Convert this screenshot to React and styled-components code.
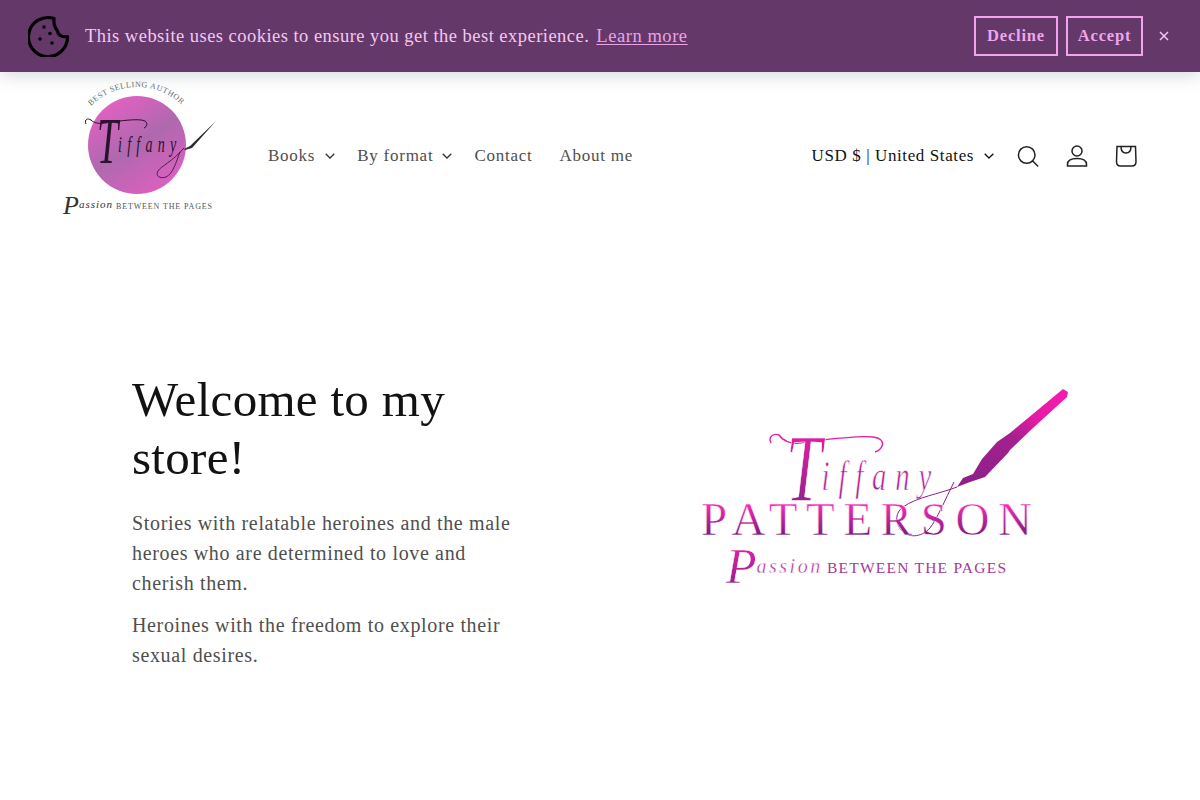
import React from "react";
import styled, { createGlobalStyle } from "styled-components";

const GlobalStyle = createGlobalStyle`
  html, body { margin: 0; padding: 0; background: #fff; }
  body { font-family: "Liberation Serif", "Times New Roman", serif; }
`;

const Banner = styled.div`
  position: relative;
  z-index: 2;
  height: 72px;
  box-sizing: border-box;
  padding: 0 23px 0 28px;
  display: flex;
  align-items: center;
  background: #65386a;
  color: #f2c9f0;
  box-shadow: 0 4px 16px rgba(60, 80, 70, 0.2);
`;

const BannerText = styled.span`
  margin-left: 15px;
  font-size: 18.5px;
  letter-spacing: 0.47px;
`;

const LearnMore = styled.a`
  margin-left: 7px;
  font-size: 18.5px;
  letter-spacing: 0.56px;
  color: #e9a3e6;
  text-decoration: underline;
  text-underline-offset: 2px;
`;

const BannerActions = styled.div`
  margin-left: auto;
  display: flex;
  align-items: center;
  gap: 8px;
`;

const BannerButton = styled.button`
  width: ${(p) => p.$width}px;
  height: 40px;
  padding: 0;
  background: transparent;
  border: 2px solid #f0a4ee;
  color: #eca6e9;
  font-family: inherit;
  font-size: 16.5px;
  font-weight: 700;
  letter-spacing: 0.8px;
`;

const CloseButton = styled.button`
  width: 26px;
  padding: 0;
  background: none;
  border: 0;
  display: flex;
  justify-content: center;
  color: #f2c9f0;
`;

const Header = styled.header`
  height: 168px;
  box-sizing: border-box;
  padding: 0 50px 0 60px;
  display: flex;
  align-items: center;
`;

const Nav = styled.nav`
  margin-left: 48px;
  display: flex;
  align-items: center;
`;

const NavItem = styled.a`
  margin-right: ${(p) => p.$gap}px;
  display: flex;
  align-items: center;
  font-size: 17px;
  letter-spacing: 0.75px;
  color: #4f4f4f;
`;

const Chevron = styled.svg`
  width: 10px;
  height: 6px;
  margin-left: ${(p) => p.$offset}px;
  fill: none;
  stroke: ${(p) => p.$color || "#333"};
  stroke-width: 1.3;
`;

const HeaderRight = styled.div`
  margin-left: auto;
  display: flex;
  align-items: center;
`;

const Locale = styled.div`
  margin-right: 9px;
  display: flex;
  align-items: center;
  font-size: 17px;
  letter-spacing: 0.6px;
  color: #121212;
`;

const IconSlot = styled.div`
  width: 49px;
  height: 44px;
  display: flex;
  align-items: center;
  justify-content: center;
`;

const LineIcon = styled.svg`
  width: 24px;
  height: 24px;
  fill: none;
  stroke: #222;
  stroke-width: 1.5;
  stroke-linecap: round;
`;

const Hero = styled.main`
  display: grid;
  grid-template-columns: 600px 600px;
  padding-top: 130px;
`;

const HeroText = styled.section`
  padding: 1px 0 0 132px;
  width: 400px;
`;

const Heading = styled.h1`
  margin: 0 0 21px;
  font-size: 49px;
  line-height: 58px;
  font-weight: 400;
  letter-spacing: 0.3px;
  color: #121212;
`;

const Paragraph = styled.p`
  margin: 0 0 12px;
  font-size: 20px;
  line-height: 30px;
  letter-spacing: 0.65px;
  color: #4f4f4f;
`;

const HeroMedia = styled.section`
  padding-left: 80px;
`;

const LogoSvg = styled.svg`
  display: block;
  flex: none;
`;

const CookieIcon = () => (
  <svg width="42" height="42" viewBox="28 15 42 42">
    <path
      d="M54 18.5A19.5 19.5 0 1 0 67.5 36.5C62 37.5 58 35 57.5 31C55 28 53.5 24 54 18.5z"
      fill="none"
      stroke="#000"
      strokeWidth="3.2"
      strokeLinejoin="round"
    />
    <circle cx="44" cy="27" r="1.8" />
    <circle cx="50" cy="33.5" r="1.8" />
    <circle cx="40" cy="39" r="1.8" />
    <circle cx="52" cy="43" r="1.8" />
  </svg>
);

const SmallLogo = () => (
  <LogoSvg width="160" height="156" viewBox="60 78 160 156">
    <defs>
      <linearGradient id="disc" x1="0.15" y1="0.05" x2="0.75" y2="1">
        <stop offset="0" stopColor="#e660c4" />
        <stop offset="0.5" stopColor="#ae69ae" />
        <stop offset="1" stopColor="#e05fc0" />
      </linearGradient>
      <path id="arc" d="M91 106 A 65 65 0 0 1 183 106" />
    </defs>
    <circle cx="137" cy="145" r="49" fill="url(#disc)" />
    <text fontFamily="Liberation Serif" fontSize="8" fill="#6b6b6b">
      <textPath href="#arc" textLength="100">BEST SELLING AUTHOR</textPath>
    </text>
    <path d="M86 124c-2-5 2-6 5-4 3 3 8 4 14 3 14-2 34-5 40-2 3 2 2 6-1 7" fill="none" stroke="#2a1230" strokeWidth="1" />
    <text transform="translate(97 163) scale(0.7 1.2)" fontFamily="Liberation Serif" fontStyle="italic" fill="#2a1230">
      <tspan fontSize="54">T</tspan>
      <tspan fontSize="20" dy="-9" letterSpacing="7.5">iffany</tspan>
    </text>
    <path d="M180 152c-4 10-7 22-14 25-6 2-11-1-8-6 3-5 14-9 26-23" fill="none" stroke="#2a1230" strokeWidth="0.8" />
    <path d="M184 149l6-3 26-25-24 27-7 2z" fill="#2e2a30" />
    <text x="63" y="214" fontFamily="Liberation Serif" fontStyle="italic" fill="#333">
      <tspan fontSize="26">P</tspan>
      <tspan fontSize="11" dy="-6" letterSpacing="1">assion</tspan>
    </text>
    <text x="116" y="209" fontFamily="Liberation Serif" fontSize="8" fill="#555" textLength="96">
      BETWEEN THE PAGES
    </text>
  </LogoSvg>
);

const BigLogo = () => (
  <LogoSvg width="400" height="230" viewBox="680 370 400 230">
    <defs>
      <linearGradient id="caps" x1="0" y1="0" x2="0" y2="1">
        <stop offset="0.25" stopColor="#f02cb0" />
        <stop offset="0.8" stopColor="#7d1a80" />
      </linearGradient>
      <linearGradient id="pen" x1="0" y1="1" x2="1" y2="0">
        <stop offset="0" stopColor="#8b2088" />
        <stop offset="0.5" stopColor="#a3208f" />
        <stop offset="0.7" stopColor="#e31ba6" />
        <stop offset="1" stopColor="#f81bb0" />
      </linearGradient>
      <linearGradient id="script" x1="0" y1="0" x2="0" y2="1">
        <stop offset="0.1" stopColor="#e81fa8" />
        <stop offset="0.9" stopColor="#8e2389" />
      </linearGradient>
    </defs>
    <path
      d="M957 487L963 478L973 474L982 459L997 442L1010 433L1063 389L1068 392L1067 397L1033 428L1010 450L1008 453L985 477L970 482z"
      fill="url(#pen)"
    />
    <path
      d="M771 443c-3-6 2-10 8-8 4 6 12 9 20 8 18-2 56-8 74-6 8 1 11 5 9 9-1 3-4 5-7 6"
      fill="none"
      stroke="#e71fa7"
      strokeWidth="1.4"
    />
    <text
      transform="translate(786 501) scale(0.8 1.2)"
      fontFamily="Liberation Serif"
      fontStyle="italic"
      fill="url(#script)"
      stroke="#fff"
      strokeWidth="0.6"
    >
      <tspan fontSize="80">T</tspan>
      <tspan fontSize="36" dy="-9" letterSpacing="11">iffany</tspan>
    </text>
    <path
      d="M957 487c-18 7-40 10-54 20-8 6-8 15-2 23 7 8 20 8 29-2 7-9 15-28 24-46"
      fill="none"
      stroke="#8c2189"
      strokeWidth="1"
    />
    <text
      x="701"
      y="535"
      fontFamily="Liberation Serif"
      fontSize="47"
      fill="url(#caps)"
      stroke="#fff"
      strokeWidth="0.5"
      textLength="331"
    >
      PATTERSON
    </text>
    <text
      x="726"
      y="583"
      fontFamily="Liberation Serif"
      fontStyle="italic"
      fill="url(#script)"
      stroke="#fff"
      strokeWidth="0.4"
    >
      <tspan fontSize="50">P</tspan>
      <tspan fontSize="20" dy="-10" letterSpacing="2.5">assion</tspan>
    </text>
    <text x="827" y="573" fontFamily="Liberation Serif" fontSize="15.5" fill="#a33a98" textLength="179">
      BETWEEN THE PAGES
    </text>
  </LogoSvg>
);

const DownChevron = ({ offset, color }) => (
  <Chevron viewBox="0 0 10 6" $offset={offset} $color={color}>
    <path d="M.7 .7 5 5l4.3-4.3" />
  </Chevron>
);

export default function App() {
  return (
    <>
      <GlobalStyle />
      <Banner>
        <CookieIcon />
        <BannerText>This website uses cookies to ensure you get the best experience.</BannerText>
        <LearnMore>Learn more</LearnMore>
        <BannerActions>
          <BannerButton $width={84}>Decline</BannerButton>
          <BannerButton $width={77}>Accept</BannerButton>
          <CloseButton>
            <svg width="10" height="10" viewBox="0 0 10 10" stroke="currentColor" strokeWidth="1.5">
              <path d="M1 1l8 8M9 1l-8 8" />
            </svg>
          </CloseButton>
        </BannerActions>
      </Banner>
      <Header>
        <SmallLogo />
        <Nav>
          <NavItem $gap={22}>
            Books
            <DownChevron offset={10} />
          </NavItem>
          <NavItem $gap={22}>
            By format
            <DownChevron offset={9} />
          </NavItem>
          <NavItem $gap={27}>Contact</NavItem>
          <NavItem $gap={0}>About me</NavItem>
        </Nav>
        <HeaderRight>
          <Locale>
            USD $ | United States
            <DownChevron offset={10} color="#121212" />
          </Locale>
          <IconSlot>
            <LineIcon viewBox="0 0 24 24">
              <circle cx="10.7" cy="11" r="8.3" />
              <path d="M16.7 17l5 5" />
            </LineIcon>
          </IconSlot>
          <IconSlot>
            <LineIcon viewBox="0 0 24 24">
              <circle cx="12" cy="7" r="5" />
              <path d="M2.5 22v-1.500c0-4 4-6 9.500-6s9.500 2 9.500 6V22z" />
            </LineIcon>
          </IconSlot>
          <IconSlot>
            <LineIcon viewBox="0 0 24 24">
              <path d="M3 2.500h18.500l.5 15c0 2.500-1.500 4.500-4 4.500H6.500c-2.500 0-4-2-4-4.500z" />
              <path d="M7 2.500c0 4 2 6.500 5 6.500s5-2.500 5-6.500" />
            </LineIcon>
          </IconSlot>
        </HeaderRight>
      </Header>
      <Hero>
        <HeroText>
          <Heading>Welcome to my store!</Heading>
          <Paragraph>Stories with relatable heroines and the male heroes who are determined to love and cherish them.</Paragraph>
          <Paragraph>Heroines with the freedom to explore their sexual desires.</Paragraph>
        </HeroText>
        <HeroMedia>
          <BigLogo />
        </HeroMedia>
      </Hero>
    </>
  );
}
